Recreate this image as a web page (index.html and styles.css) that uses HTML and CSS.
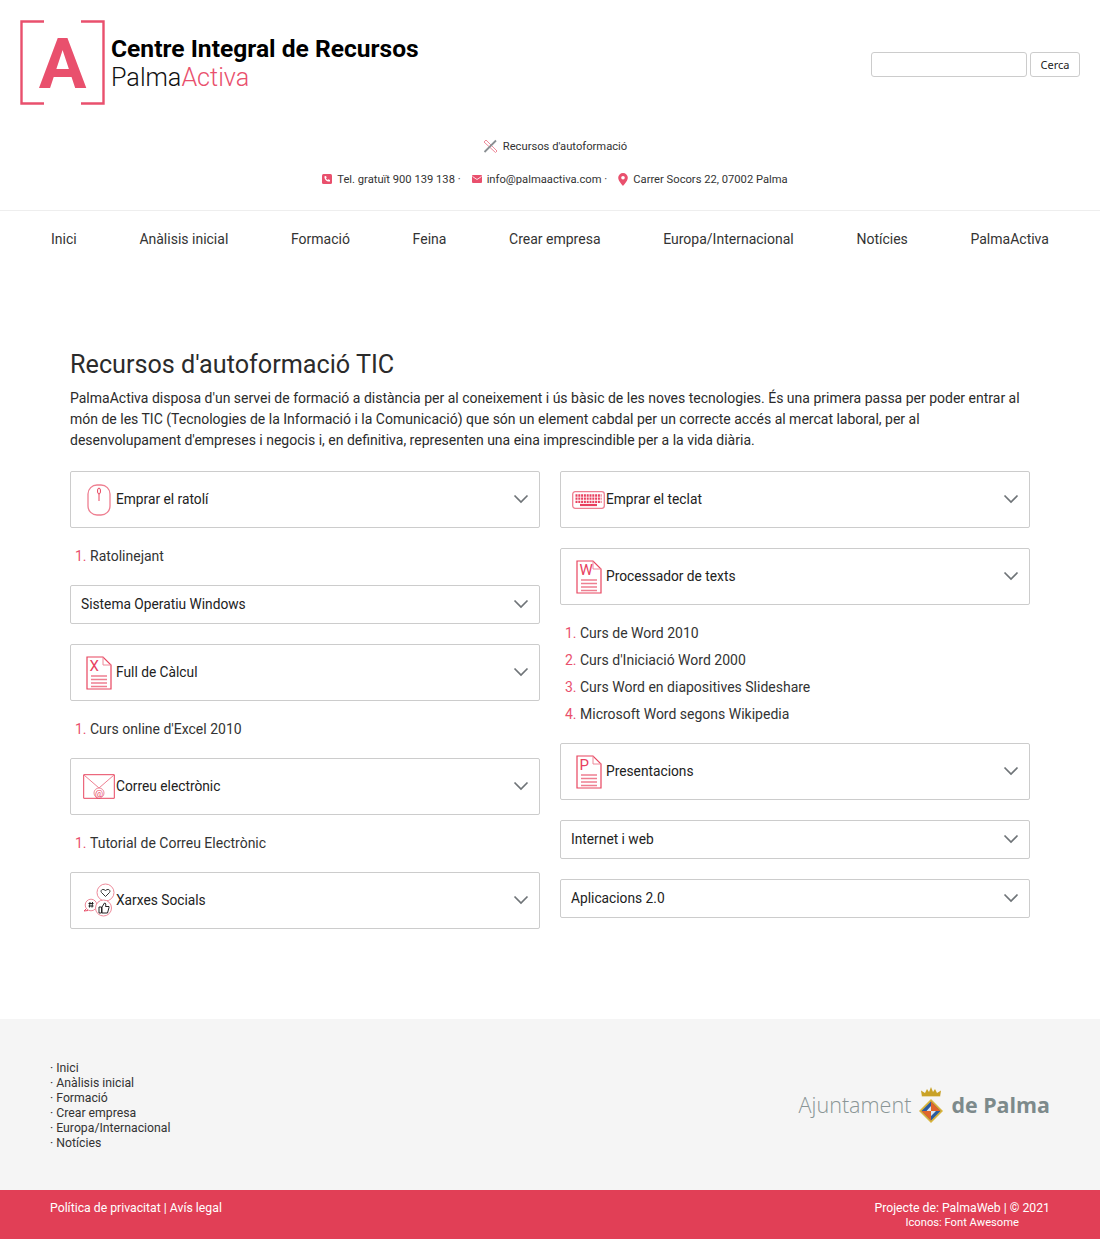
FILE: index.html
```html
<!DOCTYPE html>
<html lang="ca">
<head>
<meta charset="utf-8">
<title>Recursos d'autoformació TIC</title>
<link rel="stylesheet" href="styles.css">
</head>
<body>
<svg class="sprites" width="0" height="0" aria-hidden="true">
  <symbol id="chev" viewBox="0 0 16 10"><path d="M1.5 1.5 8 8l6.5-6.5" fill="none" stroke="#6f7478" stroke-width="1.7"/></symbol>
  <symbol id="doc" viewBox="0 0 26 34">
    <path d="M1 1h16l8 8v24H1z" fill="#fff" stroke="#e8455f" stroke-width="1.200"/>
    <path d="M17 1v8h8" fill="none" stroke="#ee8a9a"/>
    <path d="M5 20h16M5 23.500h16M5 27h16M5 30.500h16" stroke="#ee7f91" stroke-width="1.300"/>
  </symbol>
</svg>
<header class="top">
  <div class="brand">
    <svg class="mark" width="85" height="86" viewBox="0 0 85 86">
      <path d="M24 1.500H1.500v82H24M61 1.500h22.500v82H61" fill="none" stroke="#e9506d" stroke-width="2.400"/>
      <text x="42.500" y="68" text-anchor="middle" class="mark-a">A</text>
    </svg>
    <div class="brand-text">
      <div class="brand-title">Centre Integral de Recursos</div>
      <div class="brand-sub">Palma<span class="pink">Activa</span></div>
    </div>
  </div>
  <form class="search">
    <input class="search-input" type="text">
    <button class="search-btn" type="button">Cerca</button>
  </form>
</header>
<div class="resource-link">
  <svg width="14" height="14" viewBox="0 0 14 14"><path d="M1 3 3 1l11 11-1.500 1.500z" fill="none" stroke="#ee8a9a"/><path d="M13 1.500 1.500 13" stroke="#8a8f93" stroke-width="1.800"/></svg>
  <span>Recursos d'autoformació</span>
</div>
<div class="contact">
  <svg width="10" height="10" viewBox="0 0 10 10"><rect width="10" height="10" rx="1.500" fill="#e9506d"/><path d="M2.500 2.200 4 2l.7 1.600-.8.6c.4.800 1 1.400 1.800 1.800l.6-.8L8 6v1.500c-3 .5-6-2.200-5.500-5.300z" fill="#fff"/></svg>
  <span class="contact-item">Tel. gratuït 900 139 138 ·</span>
  <svg width="10" height="8" viewBox="0 0 10 8"><rect width="10" height="8" rx="1" fill="#e9506d"/><path d="m.5 1.500 4.500 3 4.500-3" fill="none" stroke="#fff" stroke-width=".8"/></svg>
  <span class="contact-item">info@palmaactiva.com ·</span>
  <svg class="pin" width="10" height="13" viewBox="0 0 10 13"><path d="M5 0a4.800 4.800 0 0 0-4.800 4.800C.2 8 5 13 5 13s4.800-5 4.800-8.200A4.800 4.800 0 0 0 5 0z" fill="#e9506d"/><circle cx="5" cy="4.800" r="1.800" fill="#fff"/></svg>
  <span>Carrer Socors 22, 07002 Palma</span>
</div>
<nav class="nav">
  <a>Inici</a><a>Anàlisis inicial</a><a>Formació</a><a>Feina</a><a>Crear empresa</a><a>Europa/Internacional</a><a>Notícies</a><a>PalmaActiva</a>
</nav>
<main class="main">
  <h1>Recursos d'autoformació TIC</h1>
  <p class="intro">PalmaActiva disposa d'un servei de formació a distància per al coneixement i ús bàsic de les noves tecnologies. És una primera passa per poder entrar al món de les TIC (Tecnologies de la Informació i la Comunicació) que són un element cabdal per un correcte accés al mercat laboral, per al desenvolupament d'empreses i negocis i, en definitiva, representen una eina imprescindible per a la vida diària.</p>
  <div class="cols">
    <div class="col">
      <div class="card card-icon">
        <span class="ico"><svg width="24" height="32" viewBox="0 0 24 32"><rect x="1" y="1" width="22" height="30" rx="9" fill="none" stroke="#ee7f91" stroke-width="1.300"/><ellipse cx="12" cy="7" rx="1.500" ry="3" fill="none" stroke="#e8455f"/><path d="M12 10v7" stroke="#e8455f"/></svg></span>
        <span class="card-label">Emprar el ratolí</span>
        <svg class="chev" width="16" height="10"><use href="#chev"/></svg>
      </div>
      <ol class="list"><li>Ratolinejant</li></ol>
      <div class="card"><span class="card-label">Sistema Operatiu Windows</span><svg class="chev" width="16" height="10"><use href="#chev"/></svg></div>
      <div class="card card-icon">
        <span class="ico"><span class="doc"><svg width="26" height="34"><use href="#doc"/></svg><b class="doc-letter">X</b></span></span>
        <span class="card-label">Full de Càlcul</span>
        <svg class="chev" width="16" height="10"><use href="#chev"/></svg>
      </div>
      <ol class="list"><li>Curs online d'Excel 2010</li></ol>
      <div class="card card-icon">
        <span class="ico"><svg width="32" height="25" viewBox="0 0 32 25"><path d="M.7.700h30.600v23.600H.7z" fill="#fff" stroke="#e8455f"/><path d="M1 1 16 14 31 1" fill="none" stroke="#ee7f91"/><circle cx="16" cy="19" r="5" fill="#fff" stroke="#ee8a9a"/><text x="16" y="22.500" text-anchor="middle" class="at">@</text></svg></span>
        <span class="card-label">Correu electrònic</span>
        <svg class="chev" width="16" height="10"><use href="#chev"/></svg>
      </div>
      <ol class="list"><li>Tutorial de Correu Electrònic</li></ol>
      <div class="card card-icon">
        <span class="ico"><svg width="32" height="35" viewBox="0 0 32 35">
          <circle cx="22.500" cy="9.500" r="8.500" fill="#fff" stroke="#ee8a9a"/><path d="M22.500 13.500 18.500 9.500c-1.500-2 1-4.500 4-2 3-2.500 5.500 0 4 2z" fill="none" stroke="#333"/>
          <circle cx="8" cy="22" r="5.800" fill="#fff" stroke="#ee8a9a"/><path d="M5.500 20.500h5M5.500 23h5M7 19l-.5 5.500M9.500 19 9 24.500" stroke="#222"/><path d="M3 26 1 28l4-.5" fill="none" stroke="#e8506a"/>
          <circle cx="20.500" cy="25" r="8" fill="#fff" stroke="#ee8a9a"/><path d="M16 24h2.500v6H16zM19 24l2.500-4c1.500 0 1.500 1.500 1 3.500H26v1l-1.500 5.500H19z" fill="none" stroke="#222"/>
        </svg></span>
        <span class="card-label">Xarxes Socials</span>
        <svg class="chev" width="16" height="10"><use href="#chev"/></svg>
      </div>
    </div>
    <div class="col">
      <div class="card card-icon">
        <span class="ico"><svg width="33" height="18" viewBox="0 0 33 18"><rect x=".7" y=".7" width="31.600" height="16.600" rx="2.500" fill="#fff" stroke="#ee7f91" stroke-width="1.300"/><path d="M3.500 4.500h26M3.500 7.700h26" stroke="#e8405f" stroke-width="2.300" stroke-dasharray="2 .8"/><path d="M3.500 10.900h26" stroke="#e8405f" stroke-width="2.300" stroke-dasharray="2 .8"/><path d="M8 14h17" stroke="#e8405f" stroke-width="2.200"/></svg></span>
        <span class="card-label">Emprar el teclat</span>
        <svg class="chev" width="16" height="10"><use href="#chev"/></svg>
      </div>
      <div class="card card-icon">
        <span class="ico"><span class="doc"><svg width="26" height="34"><use href="#doc"/></svg><b class="doc-letter">W</b></span></span>
        <span class="card-label">Processador de texts</span>
        <svg class="chev" width="16" height="10"><use href="#chev"/></svg>
      </div>
      <ol class="list"><li>Curs de Word 2010</li><li>Curs d'Iniciació Word 2000</li><li>Curs Word en diapositives Slideshare</li><li>Microsoft Word segons Wikipedia</li></ol>
      <div class="card card-icon">
        <span class="ico"><span class="doc"><svg width="26" height="34"><use href="#doc"/></svg><b class="doc-letter">P</b></span></span>
        <span class="card-label">Presentacions</span>
        <svg class="chev" width="16" height="10"><use href="#chev"/></svg>
      </div>
      <div class="card"><span class="card-label">Internet i web</span><svg class="chev" width="16" height="10"><use href="#chev"/></svg></div>
      <div class="card"><span class="card-label">Aplicacions 2.0</span><svg class="chev" width="16" height="10"><use href="#chev"/></svg></div>
    </div>
  </div>
</main>
<footer>
  <div class="foot-top">
    <ul class="foot-links">
      <li>· Inici</li><li>· Anàlisis inicial</li><li>· Formació</li><li>· Crear empresa</li><li>· Europa/Internacional</li><li>· Notícies</li>
    </ul>
    <div class="ajt">
      <span class="ajt-a">Ajuntament</span>
      <svg width="26" height="37" viewBox="0 0 26 37">
        <path d="M4 11 3 4.500l4 2.500 2-4 2 3 2-5 2 5 2-3 2 4 4-2.500L22 11z" fill="#c9a227"/>
        <path d="M4 10.500h18" stroke="#fff" stroke-width=".6"/>
        <path d="M13 13 25 25 13 37 1 25z" fill="#d9b43a"/>
        <path d="M13 15.500 22.500 25 13 34.500 3.500 25z" fill="#2a5aa0"/>
        <path d="M13 15.500 22.500 25H13zM13 25v9.500L3.500 25z" fill="#e0662a"/>
        <path d="M13 25H8.500L13 20zM13 25h5l-5 5z" fill="#dfe6ee"/>
      </svg>
      <span class="ajt-b">de Palma</span>
    </div>
  </div>
  <div class="foot-bar">
    <div>Política de privacitat | Avís legal</div>
    <div class="credits"><div>Projecte de: PalmaWeb | © 2021</div><div class="credits-small">Iconos: Font Awesome</div></div>
  </div>
</footer>
</body>
</html>
```

FILE: styles.css
```css
* { box-sizing: border-box; }
html, body { margin: 0; padding: 0; }
body { font-family: Roboto, "Liberation Sans", sans-serif; color: #222; background: #fff; font-size: 14px; }
.sprites { display: block; height: 0; }
.pink { color: #e9506d; }

.top { display: flex; justify-content: space-between; align-items: flex-start; padding: 20px 20px 0; height: 125px; }
.brand { display: flex; align-items: center; gap: 6px; }
.mark { display: block; }
.mark-a { font-family: Roboto, sans-serif; font-weight: 700; font-size: 71px; fill: #e9506d; }
.brand-title { font-size: 24.6px; font-weight: 700; color: #000; line-height: 29px; }
.brand-sub { font-size: 25.2px; font-weight: 300; color: #111; line-height: 29px; }
.search { display: flex; gap: 3px; margin-top: 32px; }
.search-input { width: 156px; height: 25px; border: 1px solid #ccc; border-radius: 3px; background: #fff; padding: 0; }
.search-btn { width: 50px; height: 25px; border: 1px solid #ccc; border-radius: 3px; background: #fff; font-family: "Noto Sans", sans-serif; font-size: 11px; color: #222; padding: 0; }

.resource-link { display: flex; justify-content: center; align-items: center; gap: 6px; height: 16px; margin-top: 13px; padding-left: 10px; font-size: 11.2px; color: #333; }
.contact { display: flex; justify-content: center; align-items: center; height: 16px; margin-top: 17px; padding-left: 10px; font-size: 11.2px; color: #333; }
.contact svg { margin-right: 5px; }
.contact-item { margin-right: 11px; }

.nav { display: flex; justify-content: space-between; margin-top: 23px; border-top: 1px solid #eee; padding: 20px 51px 0; line-height: 17px; color: #333; }
.nav a { display: block; }

.main { padding: 0 70px; margin-top: 102px; }
h1 { font-size: 25.2px; font-weight: 400; margin: 0; line-height: 30px; color: #2b2b2b; }
.intro { margin: 8px 0 20px; line-height: 21px; color: #2b2b2b; }
.cols { display: grid; grid-template-columns: 1fr 1fr; gap: 20px; }
.col { display: flex; flex-direction: column; gap: 20px; }
.card { display: flex; align-items: center; height: 39px; border: 1px solid #ccc; border-radius: 2px; padding: 0 10px; background: #fff; }
.card-icon { height: 57px; }
.card-label { flex: 1; font-size: 13.75px; line-height: 17px; }
.ico { width: 35px; flex: none; display: flex; justify-content: center; align-items: center; }
.ico svg { display: block; }
.chev { flex: none; margin: 0 0 1px 8px; }
.doc { display: block; position: relative; width: 26px; height: 34px; }
.doc-letter { position: absolute; left: 4px; top: 2px; font-size: 15px; line-height: 16px; font-weight: 400; color: #e8405f; }
.at { font-size: 9px; fill: #e8405f; font-family: Roboto, sans-serif; }

.list { margin: -5px 0; padding: 0 0 0 20px; color: #333; }
.list li { height: 27px; line-height: 27px; }
.list li::marker { color: #e9506d; }

footer { margin-top: 90px; }
.foot-top { display: flex; justify-content: space-between; align-items: center; background: #f5f5f5; height: 171px; padding: 0 50px; }
.foot-links { list-style: none; margin: 0; padding: 2px 0 0; font-size: 12.25px; line-height: 15px; color: #333; }
.ajt { display: flex; align-items: center; gap: 7px; font-family: "Open Sans", sans-serif; color: #8a9596; }
.ajt-a { font-size: 21.6px; font-weight: 300; }
.ajt-b { font-size: 21.4px; font-weight: 700; color: #7d8a8b; }
.foot-bar { display: flex; justify-content: space-between; align-items: flex-start; background: #e13f56; height: 49px; padding: 11px 50px 0; color: #fff; font-size: 12.25px; line-height: 15px; }
.credits { text-align: center; }
.credits-small { font-size: 11.2px; line-height: 14px; }
```
